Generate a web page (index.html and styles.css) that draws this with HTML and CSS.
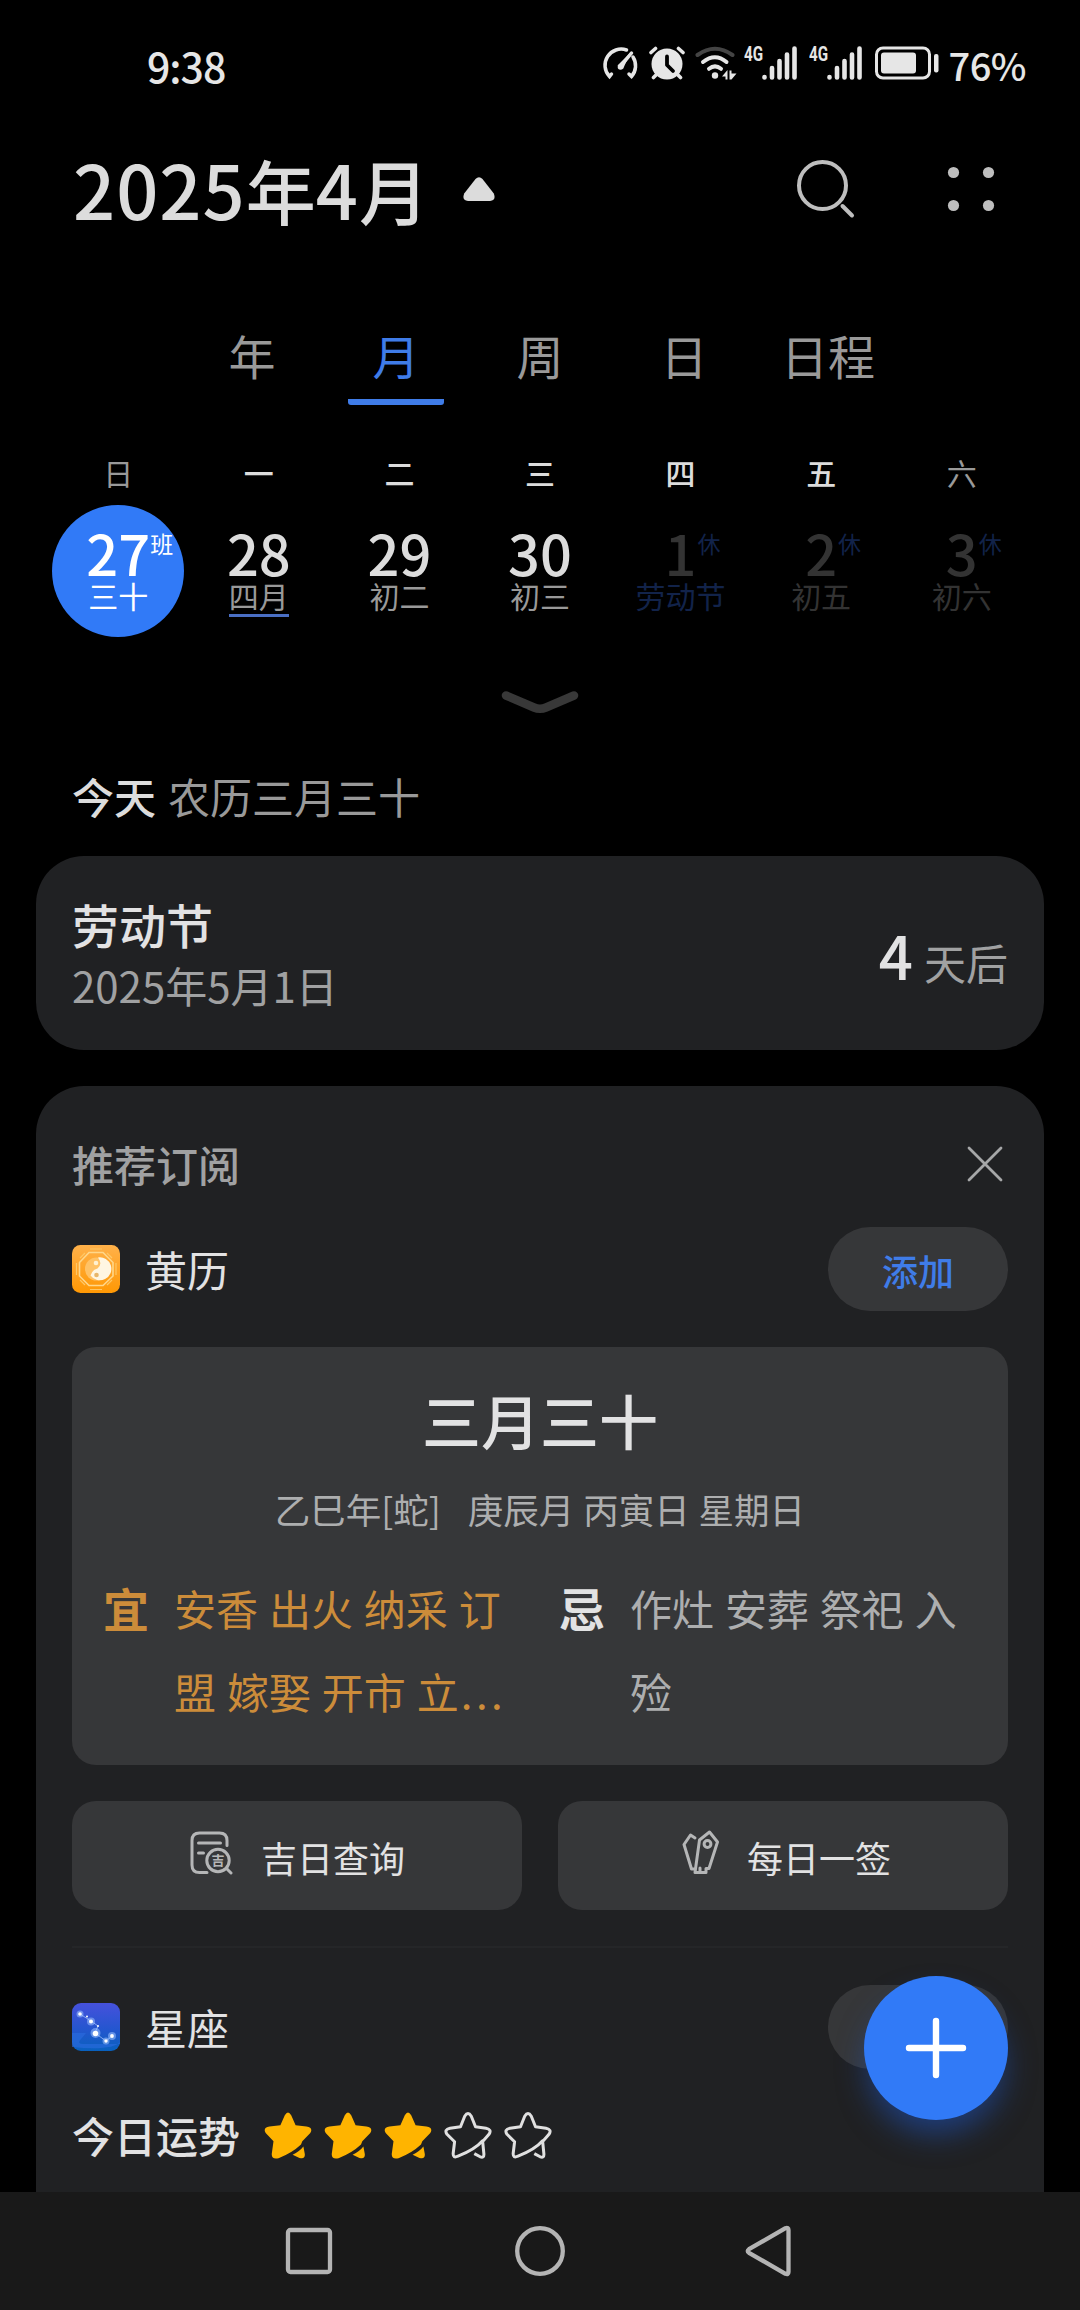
FILE: index.html
```html
<!DOCTYPE html>
<html lang="zh-CN">
<head>
<meta charset="utf-8">
<title>日历</title>
<link rel="stylesheet" href="styles.css">
</head>
<body>
<svg class="defs" width="0" height="0">
  <symbol id="star-full" viewBox="0 0 48 48">
    <path d="M20.8 4.2Q24-1 27.2 4.2L31.6 14.2L42.500 15.600Q49.500 16.900 46.300 21.900L38.300 30.200L37 33.500Q28 42 14.500 47.200Q7.200 48.800 7.800 42.600L9.500 30.200L1.700 21.900Q-1.500 16.900 5.500 15.600L16.400 14.200Z" fill="#ffb400"/>
    <path d="M39.400 35.500L40.800 43Q41.300 48.600 35.500 46.900L28.600 43.800Q35.500 40.500 39.400 35.500Z" fill="#ffb400"/>
  </symbol>
  <symbol id="star-empty" viewBox="0 0 48 48">
    <path d="M37.800 31.500L45 23.300Q48.200 18.500 42 17.200L31.500 15.800L27.300 5.200Q24 -.1 20.700 5.200L16.500 15.800L6 17.200Q-.2 18.500 3 23.300L10.600 30.800L9.200 42.300Q8.800 47.500 14 45.200Q31 38.500 38.600 29.800L39.900 43Q40.100 47.300 36.200 45.800L30.300 42.600" fill="none" stroke="#e0e0e0" stroke-width="3" stroke-linejoin="round"/>
  </symbol>
  <symbol id="signal" viewBox="0 0 36 34">
    <path d="M2.500 31v.5M10 22v9.500M17.500 15v16.500M25 8.500v23M32.500 2.500v29" stroke="#e6e6e6" stroke-width="4.600" stroke-linecap="round"/>
  </symbol>
</svg>

<header class="status">
  <span class="clock">9:38</span>
  <div class="status-icons">
    <svg class="gauge" viewBox="0 0 38 34" fill="none" stroke="#e6e6e6" stroke-width="3.500" stroke-linecap="round">
      <path d="M25.500 4A16.200 16.200 0 0 0 8.500 30.500L10.500 28M32 11A16.200 16.200 0 0 1 30.500 30.500L28 28"/>
      <path d="M19.500 20.500L30.500 7"/><circle cx="19.500" cy="21" r="2.800" fill="#e6e6e6" stroke="none"/>
      <path d="M16.500 19.500L29.500 6.500L22 23Z" fill="#e6e6e6" stroke="none"/>
    </svg>
    <svg class="alarm" viewBox="0 0 36 34">
      <circle cx="18" cy="18" r="15.500" fill="#e6e6e6"/>
      <path d="M2 6.500L6.500 2.500M34 6.500L29.500 2.500M7 29L4.500 31.500M29 29L31.500 31.500" stroke="#e6e6e6" stroke-width="3.600" stroke-linecap="round"/>
      <path d="M18 10.500V19L24 25" fill="none" stroke="#000" stroke-width="3.800" stroke-linecap="round" stroke-linejoin="round"/>
    </svg>
    <svg class="wifi" viewBox="0 0 42 34" fill="none" stroke="#e6e6e6" stroke-width="4" stroke-linecap="round">
      <path d="M2.500 9Q20 -3.500 37.500 9" stroke="#444"/>
      <path d="M8 16Q20 6.500 31.500 16"/><path d="M14 22.800Q20 18 26 22.800"/>
      <circle cx="20" cy="29.500" r="3.200" fill="#e6e6e6" stroke="none"/>
      <path d="M27 30.500L32.500 24V33.500H30.500V30.500ZM34.500 24.500H36.500V27.500H41.500L36.500 33.500H34.500Z" fill="#e6e6e6" stroke="none"/>
    </svg>
    <div class="cell"><span class="net">4G</span><svg class="bars"><use href="#signal"/></svg></div>
    <div class="cell"><span class="net">4G</span><svg class="bars"><use href="#signal"/></svg></div>
    <svg class="battery" viewBox="0 0 64 34">
      <rect x="1.500" y="2" width="53" height="30" rx="6.500" fill="none" stroke="#e6e6e6" stroke-width="3"/>
      <rect x="6" y="6.500" width="35" height="21" rx="3" fill="#e6e6e6"/>
      <rect x="59" y="8" width="4.500" height="18.500" rx="2" fill="#e6e6e6"/>
    </svg>
    <span class="percent">76%</span>
  </div>
</header>

<section class="title-bar">
  <h1 class="title"><span class="num">2025</span>年<span class="num">4</span>月</h1>
  <svg class="caret" viewBox="0 0 32 24"><path d="M12.500 2Q16 -1.600 19.500 2L30.800 16.500Q33.500 23.500 27 24H5Q-1.500 23.500 1.200 16.500Z" fill="#dcdcdc"/></svg>
  <svg class="search" viewBox="0 0 60 60" fill="none" stroke="#bebebe" stroke-width="4" stroke-linecap="round"><circle cx="26.500" cy="26.500" r="23.500"/><path d="M46.500 47L56 56.500"/></svg>
  <svg class="more" viewBox="0 0 48 46" fill="#bebebe"><circle cx="6.500" cy="6.500" r="5.600"/><circle cx="41.500" cy="6.500" r="5.600"/><circle cx="6.500" cy="39.500" r="5.600"/><circle cx="41.500" cy="39.500" r="5.600"/></svg>
</section>

<nav class="tabs">
  <span class="tab">年</span><span class="tab active">月</span><span class="tab">周</span><span class="tab">日</span><span class="tab">日程</span>
</nav>

<div class="weekdays">
  <span class="off">日</span><span>一</span><span>二</span><span>三</span><span>四</span><span>五</span><span class="off">六</span>
</div>

<div class="days">
  <div class="day today"><span class="date">27<i class="mark">班</i></span><span class="lunar">三十</span></div>
  <div class="day"><span class="date">28</span><span class="lunar first">四月</span></div>
  <div class="day"><span class="date">29</span><span class="lunar">初二</span></div>
  <div class="day"><span class="date">30</span><span class="lunar">初三</span></div>
  <div class="day next"><span class="date">1<i class="mark">休</i></span><span class="lunar holiday">劳动节</span></div>
  <div class="day next"><span class="date">2<i class="mark">休</i></span><span class="lunar">初五</span></div>
  <div class="day next"><span class="date">3<i class="mark">休</i></span><span class="lunar">初六</span></div>
</div>

<div class="handle"><svg width="80" height="28" viewBox="0 0 80 28"><path d="M6 6.500L34 18.500Q40 21 46 18.500L74 6.500" fill="none" stroke="#383838" stroke-width="8.500" stroke-linecap="round"/></svg></div>

<p class="today-line"><b>今天</b><span>农历三月三十</span></p>

<main class="feed">
  <section class="card countdown">
    <div class="event"><h2>劳动节</h2><p>2025年5月1日</p></div>
    <p class="remaining"><b>4</b><span>天后</span></p>
  </section>

  <section class="card subscribe">
    <div class="sub-head"><h3>推荐订阅</h3>
      <svg width="36" height="36" viewBox="0 0 36 36"><path d="M2 2L34 34M34 2L2 34" stroke="#a6a7a8" stroke-width="2.800" stroke-linecap="round"/></svg>
    </div>
    <div class="sub-row">
      <svg class="app-icon" viewBox="0 0 48 48">
        <defs><linearGradient id="gold" x1="0" y1="0" x2="0" y2="1"><stop offset="0" stop-color="#ffb14a"/><stop offset="1" stop-color="#ff9804"/></linearGradient></defs>
        <rect width="48" height="48" rx="8.500" fill="url(#gold)"/>
        <path d="M17 7.500H31L41 17.500V31L31 40.500H17L7.500 31V17.500Z" fill="none" stroke="#ffd78a" stroke-width="1.600"/>
        <path d="M18 4H30M18 44.500H30M4.500 18V30M44 18V30M8 13L13 8M35 8L40 13M8 35L13 40M40 35L35 40" stroke="#ffc765" stroke-width="1.200"/>
        <circle cx="24.500" cy="24" r="11.500" fill="#ffc266"/>
        <path d="M26 12.500A11.500 11.500 0 1 1 18.500 30.500Q20 25 25.500 23.500Q31 19 26 12.500Z" fill="#fff6e2"/>
        <circle cx="24" cy="18" r="2.300" fill="#fff1d0"/><circle cx="24.500" cy="30" r="2.300" fill="#e8b66a"/>
      </svg>
      <span class="sub-name">黄历</span><span class="add">添加</span>
    </div>
    <div class="almanac">
      <h4>三月三十</h4>
      <p class="ganzhi">乙巳年[蛇]&nbsp;&nbsp; 庚辰月 丙寅日 星期日</p>
      <div class="advice">
        <div class="do"><b>宜</b><p>安香 出火 纳采 订<br>盟 嫁娶 开市 立<span class="dots">...</span></p></div>
        <div class="avoid"><b>忌</b><p>作灶 安葬 祭祀 入<br>殓</p></div>
      </div>
    </div>
    <div class="actions">
      <span class="action">
        <svg class="ico-query" viewBox="0 0 44 44" fill="none" stroke="#b5b6b7" stroke-width="3" stroke-linecap="round">
          <path d="M37 14.500V9.500Q37 2 29.500 2H9.500Q2 2 2 9.500V34Q2 41.500 9.500 41.500H17"/><path d="M8.500 12H30.500M8.500 22H13.500"/>
          <circle cx="28" cy="29.500" r="11.200"/><path d="M36.500 37.500L41 42"/>
          <text x="28" y="34.200" text-anchor="middle" class="tiny">吉</text>
        </svg>吉日查询</span>
      <span class="action">
        <svg class="ico-lot" viewBox="0 0 38 46" fill="none" stroke="#b5b6b7" stroke-width="3" stroke-linejoin="round" stroke-linecap="round">
          <path d="M17.500 10L27.500 2L35.500 12L27 38.500H24V42.500H13Z"/><circle cx="25.500" cy="14" r="3.400"/><path d="M13 8L8.500 5L2 14.500L9.500 39H12.500M18 38V42"/>
        </svg>每日一签</span>
    </div>
    <div class="divider"></div>
    <div class="sub-row horoscope">
      <svg class="app-icon" viewBox="0 0 48 48">
        <defs><linearGradient id="night" x1="0" y1="0" x2="0" y2="1"><stop offset="0" stop-color="#4651dc"/><stop offset=".55" stop-color="#2456cf"/><stop offset="1" stop-color="#0861bd"/></linearGradient></defs>
        <rect width="48" height="48" rx="9" fill="url(#night)"/>
        <path d="M0 30H14L9 36Q4 41 12 41H48V39Q40 48 0 44Z" fill="#2b6de0" opacity=".6"/>
        <path d="M8 11L19 18L26 23L23 30L34 38L40 33" fill="none" stroke="#8fb0f5" stroke-width=".9"/>
        <g fill="#9cc0ff" opacity=".55"><circle cx="8" cy="11" r="3.500"/><circle cx="19" cy="18.500" r="4"/><circle cx="23.500" cy="30" r="5"/><circle cx="34" cy="38" r="3.500"/><circle cx="40" cy="33" r="4"/></g>
        <g fill="#fff"><circle cx="8" cy="11" r="1.800"/><circle cx="15" cy="13.500" r="1"/><circle cx="19" cy="18.500" r="2"/><circle cx="26" cy="23" r="1"/><circle cx="23.500" cy="30.500" r="2.800"/><circle cx="34" cy="38" r="1.700"/><circle cx="40" cy="33" r="1.900"/></g>
      </svg>
      <span class="sub-name">星座</span><span class="add"></span>
    </div>
    <div class="fortune"><b>今日运势</b>
      <div class="stars">
        <svg><use href="#star-full"/></svg><svg><use href="#star-full"/></svg><svg><use href="#star-full"/></svg><svg><use href="#star-empty"/></svg><svg><use href="#star-empty"/></svg>
      </div>
    </div>
  </section>
</main>

<div class="fab"><svg width="64" height="64" viewBox="0 0 64 64"><path d="M32 5V59M5 32H59" stroke="#fff" stroke-width="6.400" stroke-linecap="round"/></svg></div>

<footer class="navbar">
  <svg viewBox="0 0 54 54"><rect x="6" y="6" width="42" height="42" rx="2.500"/></svg>
  <svg viewBox="0 0 54 54"><circle cx="27" cy="27" r="22.800"/></svg>
  <svg viewBox="0 0 54 54"><path d="M5 25.200L41.500 4.200Q44.500 3.200 44.500 6V48Q44.500 50.800 41.500 49.800L5 28.800Q2.500 27 5 25.200Z"/></svg>
</footer>
</body>
</html>
```

FILE: styles.css
```css
* { box-sizing: border-box; margin: 0; padding: 0; }
body {
  width: 1080px; height: 2310px; overflow: hidden; position: relative;
  display: flex; flex-direction: column;
  background: #000; color: #dcdcdc;
  font-family: "Noto Sans CJK SC", sans-serif;
}
h1, h2, h3, h4, b { font-weight: 500; }
i { font-style: normal; }
svg { display: block; flex: none; }
.defs { position: absolute; }

.status {
  height: 126px; padding: 0 54px 0 147px;
  display: flex; align-items: center; justify-content: space-between;
  color: #e6e6e6; line-height: 40px;
}
.clock { font-size: 41px; font-weight: 500; letter-spacing: -1px; padding-top: 3px; }
.status-icons { display: flex; align-items: center; height: 34px; }
.gauge { width: 38px; height: 34px; margin-right: 10px; }
.alarm { width: 36px; height: 34px; margin-right: 10px; }
.wifi { width: 42px; height: 34px; margin-right: 7px; }
.cell { display: flex; width: 65px; height: 34px; }
.net { width: 18px; font: 700 20px/16px "Roboto", sans-serif; transform: scaleX(.76); transform-origin: left; white-space: nowrap; }
.bars { width: 36px; height: 34px; }
.battery { width: 64px; height: 34px; margin-left: 1px; margin-right: 9px; }
.percent { font-size: 38px; font-weight: 500; letter-spacing: -.5px; padding-top: 3px; }

.title-bar { height: 126px; padding: 0 85px 0 73px; display: flex; align-items: center; }
.title { font-size: 70px; line-height: 126px; }
.num { font-size: 74px; letter-spacing: 1px; }
.caret { width: 32px; height: 24px; margin-left: 34px; }
.search { width: 60px; height: 60px; margin-left: auto; }
.more { width: 48px; height: 46px; margin-left: 91px; }

.tabs { height: 153px; padding: 78px 180px 0; display: grid; grid-template-columns: repeat(5, 144px); }
.tab { font-size: 47px; line-height: 50px; height: 75px; text-align: center; color: #999; white-space: nowrap; }
.active { color: #3f7ce8; width: 96px; justify-self: center; border-bottom: 6px solid #3f7ce8; border-radius: 3px; }

.weekdays, .days { display: grid; grid-template-columns: repeat(7, 1fr); padding: 0 48px; text-align: center; }
.weekdays { margin-top: 45px; height: 55px; font-size: 30px; line-height: 44px; font-weight: 500; }
.off { color: #999; font-weight: 400; }
.days { height: 132px; }
.day { width: 132px; height: 132px; justify-self: center; display: flex; flex-direction: column; align-items: center; padding-top: 19px; }
.date { position: relative; font-size: 56px; line-height: 56px; font-weight: 500; height: 54px; }
.mark { position: absolute; left: 100%; top: 4px; font-size: 23px; line-height: 30px; font-weight: 400; }
.lunar { font-size: 30px; line-height: 34px; height: 39px; color: #999; }
.first { border-bottom: 3px solid #4a6fc4; }
.today { border-radius: 50%; background: #317af7; color: #fff; }
.today .lunar { color: #fff; }
.next .date, .next .lunar { color: #333; }
.next .mark { color: #12234a; left: calc(100% + 1px); }
.next .holiday { color: #12234a; }

.handle { height: 128px; padding-top: 52px; display: flex; justify-content: center; }
.today-line { height: 91px; padding-left: 72px; display: flex; gap: 12px; font-size: 42px; line-height: 62px; }
.today-line span { color: #999; }

.feed { height: 1336px; padding: 0 36px; overflow: hidden; display: flex; flex-direction: column; gap: 36px; }
.card { background: #202123; border-radius: 48px; flex: none; color: #e2e2e3; }
.countdown { height: 194px; padding: 0 36px; display: flex; align-items: center; justify-content: space-between; }
.event h2 { font-size: 47px; line-height: 64px; }
.event p { font-size: 42px; line-height: 58px; color: #a0a1a2; }
.remaining { display: flex; align-items: baseline; gap: 11px; }
.remaining b { font-size: 60px; }
.remaining span { font-size: 42px; color: #a0a1a2; }

.subscribe { height: 1200px; padding: 0 36px; border-bottom-left-radius: 0; border-bottom-right-radius: 0; }
.sub-head { height: 141px; padding: 15px 5px 0 0; display: flex; align-items: center; justify-content: space-between; }
.sub-head h3 { font-size: 42px; line-height: 60px; color: #a0a1a2; }
.sub-row { height: 84px; display: flex; align-items: center; }
.app-icon { width: 48px; height: 48px; }
.sub-name { font-size: 42px; margin-left: 25px; line-height: 60px; flex: 1; }
.add { width: 180px; height: 84px; border-radius: 42px; background: #363739; color: #3f7ce8; font-size: 36px; line-height: 86px; font-weight: 500; text-align: center; }
.almanac { height: 418px; margin-top: 36px; padding: 31px 31px 0; border-radius: 24px; background: #363739; }
.almanac h4 { font-size: 59px; line-height: 84px; text-align: center; }
.ganzhi { font-size: 35.500px; line-height: 52px; margin-top: 21px; text-align: center; color: #adaeaf; word-spacing: 1px; }
.advice { display: flex; margin-top: 31px; }
.advice div { width: 456px; display: flex; flex: none; }
.advice b { width: 71px; font-size: 46px; line-height: 83px; font-weight: 700; }
.advice p { font-size: 42px; line-height: 83px; white-space: nowrap; word-spacing: 1.500px; color: #adaeaf; }
.do b, .do p { color: #cc8c3a; }
.dots { letter-spacing: 3.500px; margin-left: 2px; }
.actions { display: flex; gap: 36px; margin-top: 36px; }
.action { flex: 1; height: 109px; border-radius: 24px; background: #363739; display: flex; align-items: center; padding-left: 118px; font-size: 36px; line-height: 54px; padding-top: 3px; }
.ico-query { width: 44px; height: 44px; margin-right: 27px; margin-top: -8px; }
.ico-lot { width: 38px; height: 46px; margin-left: 6px; margin-right: 27px; margin-top: -8px; }
.tiny { font-size: 13px; font-weight: 700; fill: #b5b6b7; stroke: none; }
.divider { height: 2px; margin-top: 36px; background: #252628; }
.horoscope { margin-top: 37px; }
.fortune { display: flex; align-items: center; margin-top: 36px; height: 60px; font-size: 42px; line-height: 60px; }
.stars { display: flex; gap: 12px; margin-left: 24px; }
.stars svg { width: 48px; height: 48px; }

.fab {
  position: absolute; left: 864px; top: 1976px; width: 144px; height: 144px; border-radius: 50%;
  background: #317af7; display: grid; place-items: center;
  box-shadow: 0 18px 30px -4px rgba(30, 90, 210, .5);
}
.navbar { height: 118px; background: #191919; padding: 0 282px; display: flex; align-items: center; justify-content: space-between; }
.navbar svg { width: 54px; height: 54px; fill: none; stroke: #b4b4b4; stroke-width: 4.300; stroke-linejoin: round; }
```
